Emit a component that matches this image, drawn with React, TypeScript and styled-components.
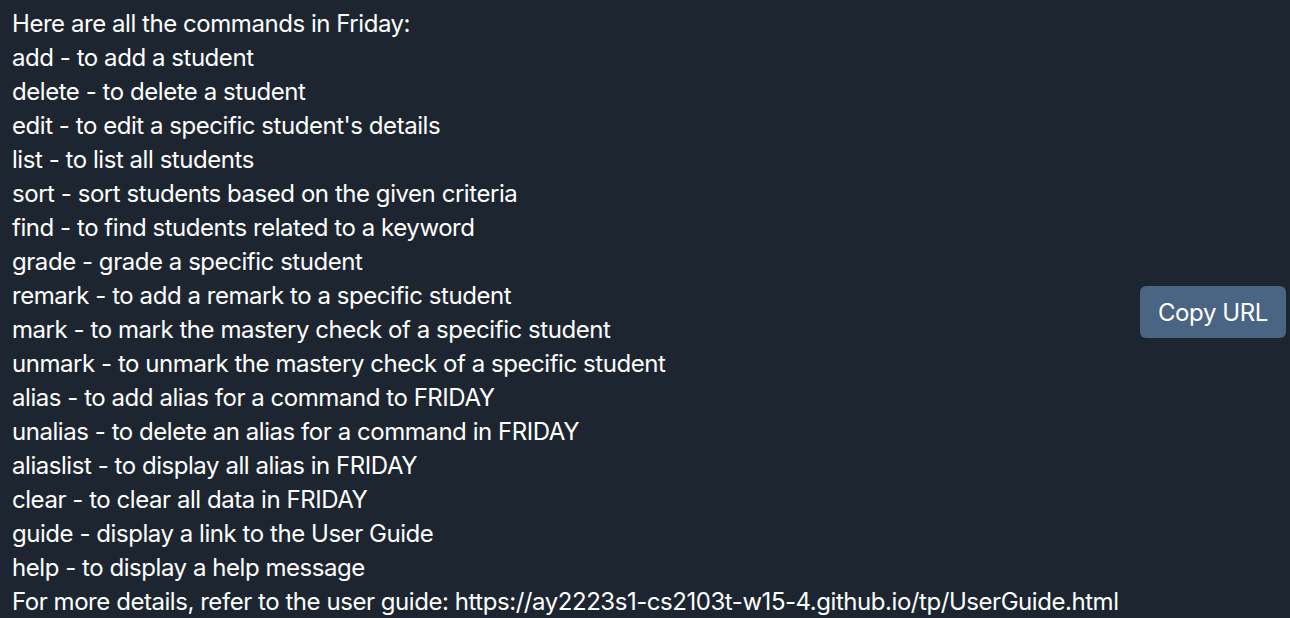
import React from "react";
import styled, { createGlobalStyle } from "styled-components";

const Global = createGlobalStyle`
  html, body { margin: 0; padding: 0; background: #1d2630; }
  body { font-family: Inter, "Noto Sans", sans-serif; }
`;

const Page = styled.div`
  width: 1290px;
  height: 618px;
  display: flex;
  align-items: center;
  justify-content: space-between;
  background: #1d2630;
  box-sizing: border-box;
  padding: 0 4px 0 12px;
  overflow: hidden;
`;

const Message = styled.div`
  display: flex;
  flex-direction: column;
  margin-top: 8px;
  color: #ffffff;
  font-size: 24px;
  line-height: 34px;
  letter-spacing: -0.45px;
  white-space: pre;
`;

const Line = styled.div``;

const CopyButton = styled.button`
  width: 146px;
  height: 52px;
  margin-top: 6px;
  background: #4a6584;
  color: #ffffff;
  border: none;
  border-radius: 6px;
  font-family: Inter, "Noto Sans", sans-serif;
  font-size: 24px;
  letter-spacing: -0.4px;
  cursor: pointer;
`;

const lines = [
  "Here are all the commands in Friday:",
  "add - to add a student",
  "delete - to delete a student",
  "edit - to edit a specific student's details",
  "list - to list all students",
  "sort - sort students based on the given criteria",
  "find - to find students related to a keyword",
  "grade - grade a specific student",
  "remark - to add a remark to a specific student",
  "mark - to mark the mastery check of a specific student",
  "unmark - to unmark the mastery check of a specific student",
  "alias - to add alias for a command to FRIDAY",
  "unalias - to delete an alias for a command in FRIDAY",
  "aliaslist - to display all alias in FRIDAY",
  "clear - to clear all data in FRIDAY",
  "guide - display a link to the User Guide",
  "help - to display a help message",
  "For more details, refer to the user guide: https://ay2223s1-cs2103t-w15-4.github.io/tp/UserGuide.html",
];

export default function App() {
  return (
    <>
      <Global />
      <Page>
        <Message>
          {lines.map((l, i) => (
            <Line key={i}>{l}</Line>
          ))}
        </Message>
        <CopyButton>Copy URL</CopyButton>
      </Page>
    </>
  );
}
